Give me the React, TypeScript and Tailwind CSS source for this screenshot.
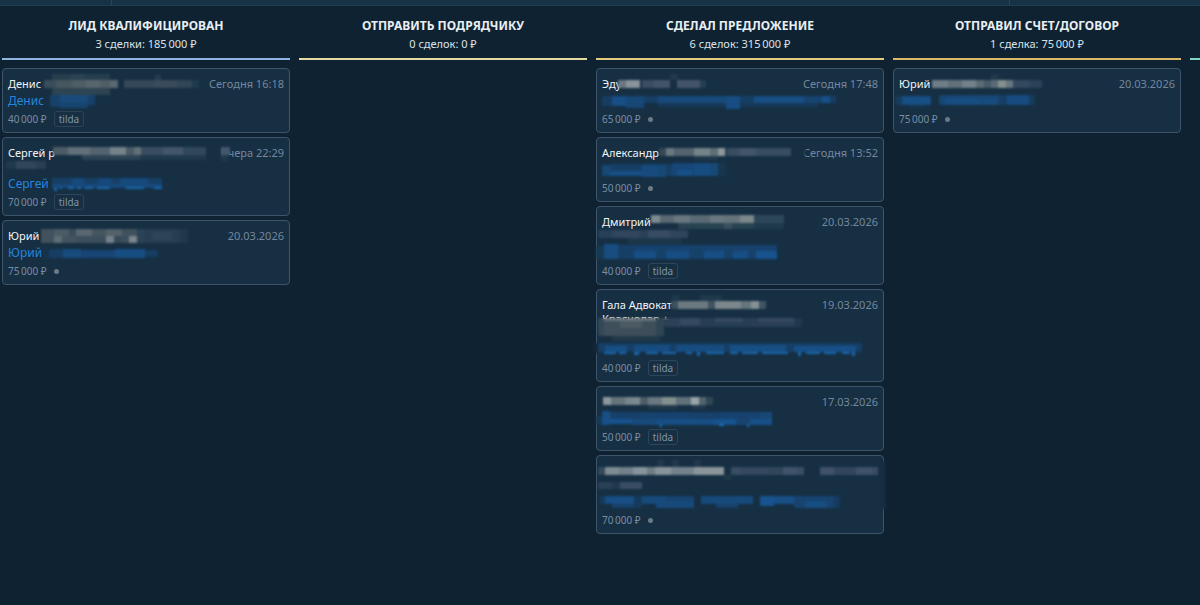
type Block = [x: number, y: number, w: number, h: number, fill: string];

type Deal = {
  name: string[];
  link: string;
  date: string;
  price: string;
  tag?: string;
  blocks: Block[];
};

type Stage = {
  title: string;
  summary: string;
  line: string;
  deals: Deal[];
};

const stages: Stage[] = [
  {
    title: 'ЛИД КВАЛИФИЦИРОВАН',
    summary: '3 сделки: 185\u2009000 ₽',
    line: 'bg-[#8fb5e3]',
    deals: [
      {
        name: ['Денис'],
        link: 'Денис',
        date: 'Сегодня 16:18',
        price: '40\u2009000 ₽',
        tag: 'tilda',
        blocks: [
          [50, 6, 58, 6, '#263f4e'],
          [68, 6, 14, 6, '#2b4452'],
          [42, 12, 12, 8, '#3a4e5a'],
          [54, 12, 16, 8, '#48575f'],
          [70, 12, 38, 8, '#4f5d65'],
          [84, 12, 14, 8, '#58666c'],
          [108, 12, 8, 8, '#5a6870'],
          [50, 20, 58, 7, '#2d4452'],
          [122, 12, 31, 8, '#34485a'],
          [153, 7, 6, 5, '#263e50'],
          [153, 12, 22, 8, '#3a4b5b'],
          [175, 12, 15, 8, '#304659'],
          [190, 12, 7, 8, '#203a4d'],
          [42, 26, 6, 14, '#162f43'],
          [48, 27, 10, 12, '#17416a'],
          [58, 27, 28, 7, '#184b7c'],
          [58, 34, 28, 6, '#174570'],
          [86, 27, 7, 10, '#17416a'],
        ],
      },
      {
        name: ['Сергей p', '\u00a0'],
        link: 'Сергей',
        date: 'Вчера 22:29',
        price: '70\u2009000 ₽',
        tag: 'tilda',
        blocks: [
          [51, 10, 15, 8, '#4c5c67'],
          [66, 10, 22, 8, '#61707a'],
          [88, 10, 20, 8, '#536371'],
          [108, 10, 16, 8, '#74828a'],
          [124, 10, 8, 8, '#4a5b68'],
          [132, 10, 7, 8, '#637078'],
          [139, 10, 22, 8, '#3a4d60'],
          [161, 10, 20, 8, '#43556a'],
          [181, 10, 23, 8, '#31485c'],
          [80, 18, 58, 5, '#2d4455'],
          [138, 18, 66, 5, '#20394c'],
          [4, 24, 10, 8, '#21394c'],
          [14, 24, 20, 8, '#324659'],
          [34, 24, 10, 8, '#293f52'],
          [219, 10, 9, 8, '#43566b'],
          [219, 18, 7, 6, '#20394c'],
          [50, 41, 110, 6, '#173f66'],
          [50, 47, 110, 4, '#174a7c'],
          [70, 41, 12, 8, '#174a7c'],
          [96, 41, 14, 9, '#16487a'],
          [118, 41, 28, 9, '#174a7c'],
          [52, 51, 3, 3, '#1b69ae'],
          [58, 50, 2, 2, '#1a68ad'],
          [66, 50, 6, 2, '#1a68ad'],
          [75, 50, 4, 2, '#1a68ad'],
          [83, 50, 8, 2, '#1a68ad'],
          [95, 50, 13, 2, '#1a68ad'],
          [124, 50, 18, 2, '#1a68ad'],
          [152, 50, 8, 2, '#1a68ad'],
        ],
      },
      {
        name: ['Юрий'],
        link: 'Юрий',
        date: '20.03.2026',
        price: '75\u2009000 ₽',
        blocks: [
          [39, 9, 13, 14, '#41525e'],
          [52, 9, 15, 7, '#4b5c66'],
          [52, 16, 8, 7, '#5f6b73'],
          [60, 16, 14, 7, '#43545f'],
          [67, 9, 8, 7, '#394d5b'],
          [74, 9, 16, 7, '#5a6770'],
          [74, 16, 30, 7, '#3c4f5c'],
          [90, 9, 14, 7, '#46565f'],
          [104, 9, 16, 7, '#52616a'],
          [104, 16, 8, 7, '#75818a'],
          [112, 16, 8, 7, '#354a58'],
          [120, 9, 15, 7, '#40515d'],
          [120, 16, 7, 7, '#3c4f5c'],
          [127, 16, 8, 7, '#7a858b'],
          [135, 9, 7, 14, '#2b4355'],
          [142, 9, 36, 14, '#263e51'],
          [150, 12, 20, 8, '#2e4558'],
          [178, 9, 8, 14, '#20384b'],
          [40, 26, 7, 14, '#163349'],
          [47, 29, 14, 9, '#173e62'],
          [61, 29, 18, 9, '#174b7c'],
          [79, 30, 34, 8, '#174575'],
          [113, 29, 30, 9, '#174e82'],
          [143, 30, 13, 7, '#173e62'],
        ],
      },
    ],
  },
  {
    title: 'ОТПРАВИТЬ ПОДРЯДЧИКУ',
    summary: '0 сделок: 0 ₽',
    line: 'bg-[#e5d9a4]',
    deals: [],
  },
  {
    title: 'СДЕЛАЛ ПРЕДЛОЖЕНИЕ',
    summary: '6 сделок: 315\u2009000 ₽',
    line: 'bg-[#e2cb80]',
    deals: [
      {
        name: ['Эду'],
        link: '',
        date: 'Сегодня 17:48',
        price: '65\u2009000 ₽',
        blocks: [
          [22, 12, 8, 8, '#6a7780'],
          [30, 12, 14, 8, '#88939a'],
          [46, 12, 12, 8, '#3a4d61'],
          [58, 12, 16, 8, '#43546a'],
          [74, 6, 8, 6, '#20394c'],
          [81, 12, 23, 8, '#43546a'],
          [104, 12, 6, 8, '#263f53'],
          [6, 28, 10, 10, '#163c61'],
          [16, 28, 14, 10, '#174f86'],
          [30, 28, 18, 12, '#174775'],
          [48, 28, 14, 7, '#163f66'],
          [62, 28, 70, 7, '#174a7a'],
          [130, 28, 14, 13, '#174d82'],
          [144, 28, 14, 7, '#163e64'],
          [158, 28, 50, 7, '#174e84'],
          [208, 28, 18, 7, '#174370'],
          [226, 28, 8, 7, '#175089'],
          [234, 28, 6, 7, '#173e62'],
          [62, 35, 68, 4, '#17395a'],
          [144, 35, 78, 4, '#17395a'],
        ],
      },
      {
        name: ['Александр'],
        link: '',
        date: 'Сегодня 13:52',
        price: '50\u2009000 ₽',
        blocks: [
          [63, 11, 7, 8, '#34495a'],
          [70, 11, 8, 8, '#6b7881'],
          [78, 11, 20, 8, '#53636f'],
          [98, 11, 16, 8, '#75838b'],
          [114, 11, 8, 8, '#5e6e78'],
          [122, 11, 7, 8, '#8d9799'],
          [129, 11, 3, 8, '#2a4155'],
          [132, 11, 12, 8, '#394d61'],
          [144, 11, 16, 8, '#43556b'],
          [160, 11, 35, 8, '#384c62'],
          [98, 19, 24, 4, '#203a4c'],
          [207, 11, 3, 8, '#162f43'],
          [6, 28, 8, 11, '#174876'],
          [14, 27, 62, 7, '#173f65'],
          [14, 34, 44, 5, '#174f85'],
          [46, 28, 16, 12, '#174b7e'],
          [62, 28, 8, 12, '#174875'],
          [70, 34, 6, 5, '#173f65'],
          [76, 26, 22, 13, '#174778'],
          [98, 26, 16, 13, '#174c80'],
          [114, 26, 8, 13, '#174876'],
          [82, 33, 14, 6, '#175089'],
          [122, 26, 8, 13, '#18374f'],
        ],
      },
      {
        name: ['Дмитрий', '\u00a0'],
        link: '',
        date: '20.03.2026',
        price: '40\u2009000 ₽',
        tag: 'tilda',
        blocks: [
          [55, 9, 9, 8, '#7d8a91'],
          [64, 9, 14, 8, '#596873'],
          [78, 9, 16, 8, '#687680'],
          [94, 9, 20, 8, '#596a75'],
          [114, 9, 14, 8, '#697880'],
          [128, 9, 16, 8, '#64747b'],
          [144, 9, 14, 8, '#7a878b'],
          [158, 9, 30, 8, '#2d465a'],
          [82, 17, 76, 6, '#294352'],
          [128, 17, 8, 6, '#3b515d'],
          [158, 17, 30, 6, '#20394c'],
          [2, 24, 14, 8, '#26405a'],
          [16, 24, 28, 8, '#31465d'],
          [44, 24, 8, 8, '#2a4056'],
          [52, 24, 22, 8, '#374c63'],
          [74, 24, 18, 8, '#2e455b'],
          [32, 32, 54, 6, '#1d374a'],
          [0, 40, 8, 13, '#163955'],
          [8, 39, 173, 6, '#174270'],
          [8, 38, 14, 15, '#174d80'],
          [22, 40, 16, 13, '#163f66'],
          [38, 45, 22, 8, '#174e84'],
          [60, 40, 10, 13, '#164169'],
          [70, 45, 23, 8, '#174d82'],
          [93, 40, 15, 13, '#164169'],
          [108, 45, 20, 8, '#174e84'],
          [128, 40, 9, 13, '#164169'],
          [137, 45, 15, 8, '#174e84'],
          [152, 40, 8, 13, '#17416a'],
          [160, 45, 21, 8, '#17538e'],
        ],
      },
      {
        name: ['Гала Адвокат', 'Краснодар +', '\u00a0'],
        link: '',
        date: '19.03.2026',
        price: '40\u2009000 ₽',
        tag: 'tilda',
        blocks: [
          [76, 6, 7, 6, '#20394c'],
          [104, 6, 22, 6, '#20394c'],
          [75, 12, 7, 8, '#3c505e'],
          [82, 12, 30, 8, '#6c7981'],
          [112, 12, 7, 8, '#40535f'],
          [119, 12, 26, 8, '#7b878c'],
          [145, 12, 10, 8, '#65757e'],
          [155, 12, 8, 8, '#849096'],
          [163, 12, 7, 8, '#405461'],
          [2, 29, 6, 18, '#354856'],
          [8, 29, 52, 4, '#66727b'],
          [8, 32, 52, 15, '#3e4f5b'],
          [24, 32, 22, 7, '#4b5a63'],
          [60, 29, 8, 18, '#2f4654'],
          [16, 47, 48, 5, '#213a4a'],
          [68, 29, 87, 9, '#263e52'],
          [68, 29, 16, 9, '#2b4256'],
          [84, 29, 20, 7, '#354960'],
          [119, 29, 28, 4, '#354960'],
          [155, 29, 44, 9, '#293f54'],
          [162, 29, 36, 4, '#354960'],
          [199, 29, 7, 9, '#20384b'],
          [-4, 54, 6, 10, '#122637'],
          [2, 54, 264, 9, '#163f65'],
          [9, 57, 22, 6, '#174e84'],
          [38, 56, 36, 7, '#174c80'],
          [80, 56, 48, 7, '#174c80'],
          [134, 56, 56, 7, '#174e84'],
          [198, 57, 62, 6, '#175089'],
          [8, 63, 12, 2, '#1a66aa'],
          [23, 63, 7, 2, '#1a66aa'],
          [38, 63, 5, 3, '#1a66aa'],
          [50, 63, 12, 2, '#1a66aa'],
          [66, 63, 14, 2, '#1a66aa'],
          [90, 63, 6, 2, '#1a66aa'],
          [101, 63, 3, 4, '#1a66aa'],
          [110, 63, 18, 2, '#1a66aa'],
          [134, 63, 8, 2, '#1a66aa'],
          [146, 63, 16, 2, '#1a66aa'],
          [166, 63, 26, 2, '#1a66aa'],
          [202, 63, 3, 4, '#1a66aa'],
          [210, 63, 14, 2, '#1a66aa'],
          [228, 63, 12, 2, '#1a66aa'],
          [246, 63, 8, 2, '#1a66aa'],
          [256, 63, 3, 4, '#1a66aa'],
        ],
      },
      {
        name: ['\u00a0'],
        link: '',
        date: '17.03.2026',
        price: '50\u2009000 ₽',
        tag: 'tilda',
        blocks: [
          [7, 11, 8, 8, '#8d979b'],
          [15, 11, 14, 8, '#65737c'],
          [29, 11, 8, 8, '#78858c'],
          [37, 11, 7, 8, '#7c898f'],
          [44, 11, 8, 8, '#4d5e69'],
          [52, 11, 14, 8, '#6a7881'],
          [66, 11, 14, 8, '#84908f'],
          [80, 11, 15, 8, '#61717b'],
          [95, 11, 8, 8, '#9aa4a8'],
          [103, 11, 7, 8, '#54646f'],
          [110, 11, 7, 8, '#2f4756'],
          [52, 19, 30, 4, '#213a4b'],
          [96, 19, 14, 4, '#213a4b'],
          [0, 30, 6, 9, '#163955'],
          [6, 25, 8, 14, '#174f86'],
          [14, 26, 30, 7, '#17416a'],
          [14, 33, 22, 5, '#17538e'],
          [36, 33, 24, 6, '#174a7a'],
          [44, 26, 50, 7, '#174270'],
          [60, 33, 58, 6, '#174e84'],
          [94, 26, 30, 7, '#17416a'],
          [118, 33, 22, 6, '#17538e'],
          [124, 26, 40, 7, '#174270'],
          [140, 33, 14, 6, '#17446f'],
          [154, 33, 22, 6, '#175089'],
          [164, 26, 12, 7, '#174876'],
          [64, 38, 2, 3, '#1b6fb8'],
          [123, 38, 5, 2, '#1b6fb8'],
          [151, 38, 2, 3, '#1b6fb8'],
        ],
      },
      {
        name: ['\u00a0', '\u00a0'],
        link: '',
        date: '',
        price: '70\u2009000 ₽',
        blocks: [
          [286, 6, 4, 48, '#162b3d'],
          [2, 12, 7, 8, '#34495a'],
          [9, 12, 14, 8, '#7f8b92'],
          [23, 12, 14, 8, '#71808a'],
          [37, 12, 14, 8, '#87939a'],
          [51, 12, 8, 8, '#6d7b84'],
          [59, 12, 16, 8, '#87939a'],
          [75, 12, 23, 8, '#74828b'],
          [98, 12, 30, 8, '#8a959b'],
          [61, 5, 7, 7, '#21394b'],
          [76, 5, 7, 7, '#21394b'],
          [98, 5, 7, 7, '#21394b'],
          [128, 20, 7, 5, '#20384a'],
          [135, 12, 9, 8, '#384c62'],
          [144, 12, 28, 8, '#34485e'],
          [172, 12, 15, 8, '#31465b'],
          [187, 12, 14, 8, '#40536a'],
          [201, 12, 7, 8, '#394e63'],
          [224, 12, 14, 8, '#40516a'],
          [238, 12, 22, 8, '#31465b'],
          [260, 12, 16, 8, '#40516a'],
          [276, 12, 6, 8, '#384c62'],
          [2, 27, 14, 7, '#2a4056'],
          [16, 27, 8, 7, '#22394d'],
          [24, 27, 22, 7, '#3a4c63'],
          [4, 41, 5, 8, '#163b5e'],
          [9, 41, 29, 8, '#174e84'],
          [38, 41, 8, 12, '#163a5b'],
          [16, 49, 22, 4, '#17416a'],
          [46, 41, 24, 8, '#174a7a'],
          [60, 46, 38, 7, '#174a7a'],
          [70, 41, 28, 5, '#174370'],
          [105, 41, 52, 8, '#174a7a'],
          [120, 49, 22, 4, '#17416a'],
          [164, 41, 14, 10, '#17538e'],
          [178, 41, 20, 8, '#174f86'],
          [198, 41, 40, 12, '#174370'],
          [209, 46, 22, 7, '#174d80'],
          [238, 41, 6, 12, '#163b5e'],
        ],
      },
    ],
  },
  {
    title: 'ОТПРАВИЛ СЧЕТ/ДОГОВОР',
    summary: '1 сделка: 75\u2009000 ₽',
    line: 'bg-[#dcb968]',
    deals: [
      {
        name: ['Юрий'],
        link: '',
        date: '20.03.2026',
        price: '75\u2009000 ₽',
        blocks: [
          [39, 12, 16, 8, '#6f7d87'],
          [55, 12, 14, 8, '#62707b'],
          [69, 12, 14, 8, '#73818a'],
          [83, 12, 8, 8, '#5b6a75'],
          [91, 12, 7, 8, '#475a67'],
          [98, 6, 8, 6, '#213a4a'],
          [98, 12, 7, 8, '#5a6a74'],
          [105, 12, 8, 8, '#84908f'],
          [113, 12, 7, 8, '#67767f'],
          [120, 12, 16, 8, '#344960'],
          [136, 12, 13, 8, '#2b4257'],
          [2, 28, 7, 9, '#163b5b'],
          [9, 28, 29, 9, '#174e84'],
          [16, 37, 16, 4, '#17344c'],
          [46, 27, 60, 10, '#174672'],
          [52, 30, 36, 7, '#174d82'],
          [90, 30, 14, 7, '#174c80'],
          [106, 27, 8, 10, '#163f66'],
          [114, 27, 22, 10, '#174c80'],
          [136, 27, 6, 10, '#163b5b'],
        ],
      },
    ],
  },
  { title: '', summary: '', line: 'bg-[#7fd8c2]', deals: [] },
];

function Mosaic({ blocks }: { blocks: Block[] }) {
  return (
    <svg
      aria-hidden="true"
      className="pointer-events-none absolute -left-px -top-px h-full w-full overflow-visible blur-[1px]"
    >
      {blocks.map(([x, y, w, h, fill], i) => (
        <rect key={i} x={x} y={y} width={w} height={h} fill={fill} />
      ))}
    </svg>
  );
}

function DealCard({ deal }: { deal: Deal }) {
  return (
    <li className="relative rounded border border-[#3e546b] bg-[#162f43] px-[5px] pt-2 pb-[5px]">
      <div className="flex justify-between text-[11px] leading-[14px]">
        <div className="text-[#f1f5f8]">
          {deal.name.map((row, i) => (
            <p key={i}>{row}</p>
          ))}
        </div>
        <time className="text-[#74879d]">{deal.date}</time>
      </div>
      <a
        href="#"
        aria-label={deal.link || 'Сделка'}
        className="block h-5 text-[12px] leading-5 text-[#2486dd]"
      >
        {deal.link}
      </a>
      <div className="flex h-4 items-center gap-[7px] text-[10px] leading-4 text-[#7a8da3]">
        <span>{deal.price}</span>
        {deal.tag ? (
          <span className="rounded-[3px] border border-[#2c4559] px-1 leading-[14px] text-[#8394a7]">
            {deal.tag}
          </span>
        ) : (
          <span className="size-[5px] rounded-full bg-[#6c7a85]" />
        )}
      </div>
      <Mosaic blocks={deal.blocks} />
    </li>
  );
}

function StageColumn({ stage }: { stage: Stage }) {
  return (
    <section className="w-72 shrink-0">
      <header className="flex h-[54px] flex-col justify-between text-center">
        <div className="pt-3">
          <h2 className="text-[12px] leading-4 font-bold text-[#e9eff4]">{stage.title}</h2>
          <p className="pt-0.5 text-[11px] leading-4 text-[#dbe3ea]">{stage.summary}</p>
        </div>
        <div className={`h-0.5 ${stage.line}`} />
      </header>
      <ul className="flex flex-col gap-1 pt-2">
        {stage.deals.map((deal, i) => (
          <DealCard key={i} deal={deal} />
        ))}
      </ul>
    </section>
  );
}

export default function App() {
  return (
    <div className="flex min-h-screen flex-col overflow-hidden bg-[#0f2231] font-['Noto_Sans',sans-serif]">
      <div className="flex h-1.5 border-b border-[#213d50] bg-[#173146]">
        <div className="w-28 border-r border-[#294559]" />
        <div className="grow" />
        <div className="w-[191px] border-l border-[#294559]" />
      </div>
      <main className="flex grow gap-[9px] overflow-hidden pl-0.5">
        {stages.map((stage, i) => (
          <StageColumn key={i} stage={stage} />
        ))}
      </main>
    </div>
  );
}
